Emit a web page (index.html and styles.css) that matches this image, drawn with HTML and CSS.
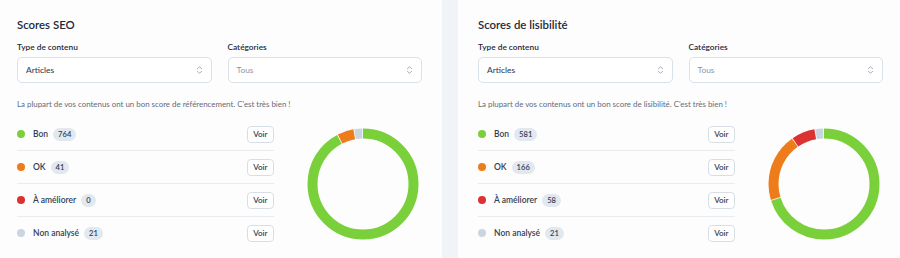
FILE: index.html
```html
<!DOCTYPE html>
<html lang="fr">

<head>
    <meta charset="UTF-8">
    <meta name="viewport" content="width=device-width, initial-scale=1.0">
    <title>Scores SEO et lisibilité</title>
    <link rel="stylesheet" href="styles.css">
</head>

<body>
    <div class="dashboard">

        <!-- Scores SEO -->
        <section class="card">
            <h2 class="card-title">Scores SEO</h2>
            <div class="filters">
                <div class="field">
                    <label class="field-label">Type de contenu</label>
                    <div class="select">
                        <span class="select-value">Articles</span>
                        <svg class="select-icon" viewBox="0 0 8 12" width="7" height="10"><path d="M1.5 4.5 4 2l2.5 2.5M1.5 7.5 4 10l2.5-2.5" fill="none" stroke="currentColor" stroke-width="1.1" stroke-linecap="round" stroke-linejoin="round"/></svg>
                    </div>
                </div>
                <div class="field">
                    <label class="field-label">Catégories</label>
                    <div class="select">
                        <span class="select-value placeholder">Tous</span>
                        <svg class="select-icon" viewBox="0 0 8 12" width="7" height="10"><path d="M1.5 4.5 4 2l2.5 2.5M1.5 7.5 4 10l2.5-2.5" fill="none" stroke="currentColor" stroke-width="1.1" stroke-linecap="round" stroke-linejoin="round"/></svg>
                    </div>
                </div>
            </div>
            <p class="description">La plupart de vos contenus ont un bon score de référencement. C'est très bien !</p>
            <div class="scores">
                <ul class="score-list">
                    <li class="score-row">
                        <span class="dot dot-good"></span>
                        <span class="score-label">Bon</span>
                        <span class="badge">764</span>
                        <button class="btn">Voir</button>
                    </li>
                    <li class="score-row">
                        <span class="dot dot-ok"></span>
                        <span class="score-label">OK</span>
                        <span class="badge">41</span>
                        <button class="btn">Voir</button>
                    </li>
                    <li class="score-row">
                        <span class="dot dot-bad"></span>
                        <span class="score-label">À améliorer</span>
                        <span class="badge">0</span>
                        <button class="btn">Voir</button>
                    </li>
                    <li class="score-row">
                        <span class="dot dot-none"></span>
                        <span class="score-label">Non analysé</span>
                        <span class="badge">21</span>
                        <button class="btn">Voir</button>
                    </li>
                </ul>
                <!-- total 826 -->
                <svg class="donut" viewBox="0 0 112 112" width="112" height="112">
                    <g transform="rotate(-90 56 56)" fill="none" stroke-width="10">
                        <circle cx="56" cy="56" r="50.5" pathLength="826" stroke="#7ad03a" stroke-dasharray="762 826" stroke-dashoffset="0"/>
                        <circle cx="56" cy="56" r="50.5" pathLength="826" stroke="#ee7c1b" stroke-dasharray="39 826" stroke-dashoffset="-764"/>
                        <circle cx="56" cy="56" r="50.5" pathLength="826" stroke="#cbd5e1" stroke-dasharray="19 826" stroke-dashoffset="-805"/>
                    </g>
                </svg>
            </div>
        </section>

        <!-- Scores de lisibilité -->
        <section class="card">
            <h2 class="card-title">Scores de lisibilité</h2>
            <div class="filters">
                <div class="field">
                    <label class="field-label">Type de contenu</label>
                    <div class="select">
                        <span class="select-value">Articles</span>
                        <svg class="select-icon" viewBox="0 0 8 12" width="7" height="10"><path d="M1.5 4.5 4 2l2.5 2.5M1.5 7.5 4 10l2.5-2.5" fill="none" stroke="currentColor" stroke-width="1.1" stroke-linecap="round" stroke-linejoin="round"/></svg>
                    </div>
                </div>
                <div class="field">
                    <label class="field-label">Catégories</label>
                    <div class="select">
                        <span class="select-value placeholder">Tous</span>
                        <svg class="select-icon" viewBox="0 0 8 12" width="7" height="10"><path d="M1.5 4.5 4 2l2.5 2.5M1.5 7.5 4 10l2.5-2.5" fill="none" stroke="currentColor" stroke-width="1.1" stroke-linecap="round" stroke-linejoin="round"/></svg>
                    </div>
                </div>
            </div>
            <p class="description">La plupart de vos contenus ont un bon score de lisibilité. C'est très bien !</p>
            <div class="scores">
                <ul class="score-list">
                    <li class="score-row">
                        <span class="dot dot-good"></span>
                        <span class="score-label">Bon</span>
                        <span class="badge">581</span>
                        <button class="btn">Voir</button>
                    </li>
                    <li class="score-row">
                        <span class="dot dot-ok"></span>
                        <span class="score-label">OK</span>
                        <span class="badge">166</span>
                        <button class="btn">Voir</button>
                    </li>
                    <li class="score-row">
                        <span class="dot dot-bad"></span>
                        <span class="score-label">À améliorer</span>
                        <span class="badge">58</span>
                        <button class="btn">Voir</button>
                    </li>
                    <li class="score-row">
                        <span class="dot dot-none"></span>
                        <span class="score-label">Non analysé</span>
                        <span class="badge">21</span>
                        <button class="btn">Voir</button>
                    </li>
                </ul>
                <!-- total 826 -->
                <svg class="donut" viewBox="0 0 112 112" width="112" height="112">
                    <g transform="rotate(-90 56 56)" fill="none" stroke-width="10">
                        <circle cx="56" cy="56" r="50.5" pathLength="826" stroke="#7ad03a" stroke-dasharray="579 826" stroke-dashoffset="0"/>
                        <circle cx="56" cy="56" r="50.5" pathLength="826" stroke="#ee7c1b" stroke-dasharray="164 826" stroke-dashoffset="-581"/>
                        <circle cx="56" cy="56" r="50.5" pathLength="826" stroke="#dc3232" stroke-dasharray="56 826" stroke-dashoffset="-747"/>
                        <circle cx="56" cy="56" r="50.5" pathLength="826" stroke="#cbd5e1" stroke-dasharray="19 826" stroke-dashoffset="-805"/>
                    </g>
                </svg>
            </div>
        </section>

    </div>
</body>

</html>
```

FILE: styles.css
```css
/* Global Reset */
* {
    margin: 0;
    padding: 0;
    box-sizing: border-box;
}

body {
    background: #f0f3f7;
    font-family: Lato, "Noto Sans", sans-serif;
    color: #1e293b;
    overflow: hidden;
}

/* Two cards side by side */
.dashboard {
    display: flex;
    gap: 16px;
    margin-left: -3px;
}

.card {
    flex: 0 0 445px;
    background: #fdfdfd;
    padding: 17px 20px 20px;
}

.card-title {
    font-size: 11.4px;
    font-weight: 600;
    line-height: 16px;
    margin-bottom: 8px;
}

/* Filters */
.filters {
    display: grid;
    grid-template-columns: 1fr 1fr;
    gap: 16px;
}

.field-label {
    display: block;
    font-size: 8.3px;
    font-weight: 600;
    line-height: 12px;
    margin-bottom: 4px;
}

.select {
    display: flex;
    align-items: center;
    justify-content: space-between;
    height: 26px;
    padding: 0 8px;
    background: #fff;
    border: 1px solid #dbe1e8;
    border-radius: 5px;
}

.select-value {
    font-size: 8.4px;
    font-weight: 500;
    color: #334155;
}

.select-value.placeholder {
    color: #8a96a8;
    font-weight: 400;
}

.select-icon {
    color: #94a3b8;
}

.description {
    font-size: 7.9px;
    line-height: 12px;
    color: #5f6b7c;
    margin-top: 15px;
    margin-bottom: 8px;
}

/* Scores list + chart */
.scores {
    display: flex;
    align-items: center;
    justify-content: space-between;
}

.score-list {
    list-style: none;
    width: 257px;
}

.score-row {
    display: flex;
    align-items: center;
    padding: 7.5px 0;
    border-bottom: 1px solid #e8ecf1;
}

.score-row:last-child {
    border-bottom: none;
}

.dot {
    width: 8px;
    height: 8px;
    border-radius: 50%;
    margin-right: 8px;
}

.dot-good { background: #7ad03a; }
.dot-ok { background: #ee7c1b; }
.dot-bad { background: #dc3232; }
.dot-none { background: #cbd5e1; }

.score-label {
    font-size: 8.5px;
    font-weight: 600;
    color: #334155;
    margin-right: 5px;
}

.badge {
    font-size: 7.6px;
    font-weight: 600;
    color: #334155;
    background: #e2e8f0;
    border-radius: 8px;
    padding: 2px 5px;
    line-height: 9px;
}

.btn {
    margin-left: auto;
    height: 17px;
    padding: 0 5.5px;
    font-family: inherit;
    font-size: 8px;
    font-weight: 600;
    color: #334155;
    background: #fff;
    border: 1px solid #d8dee6;
    border-radius: 4px;
}

.donut {
    margin-right: 3px;
}
```
